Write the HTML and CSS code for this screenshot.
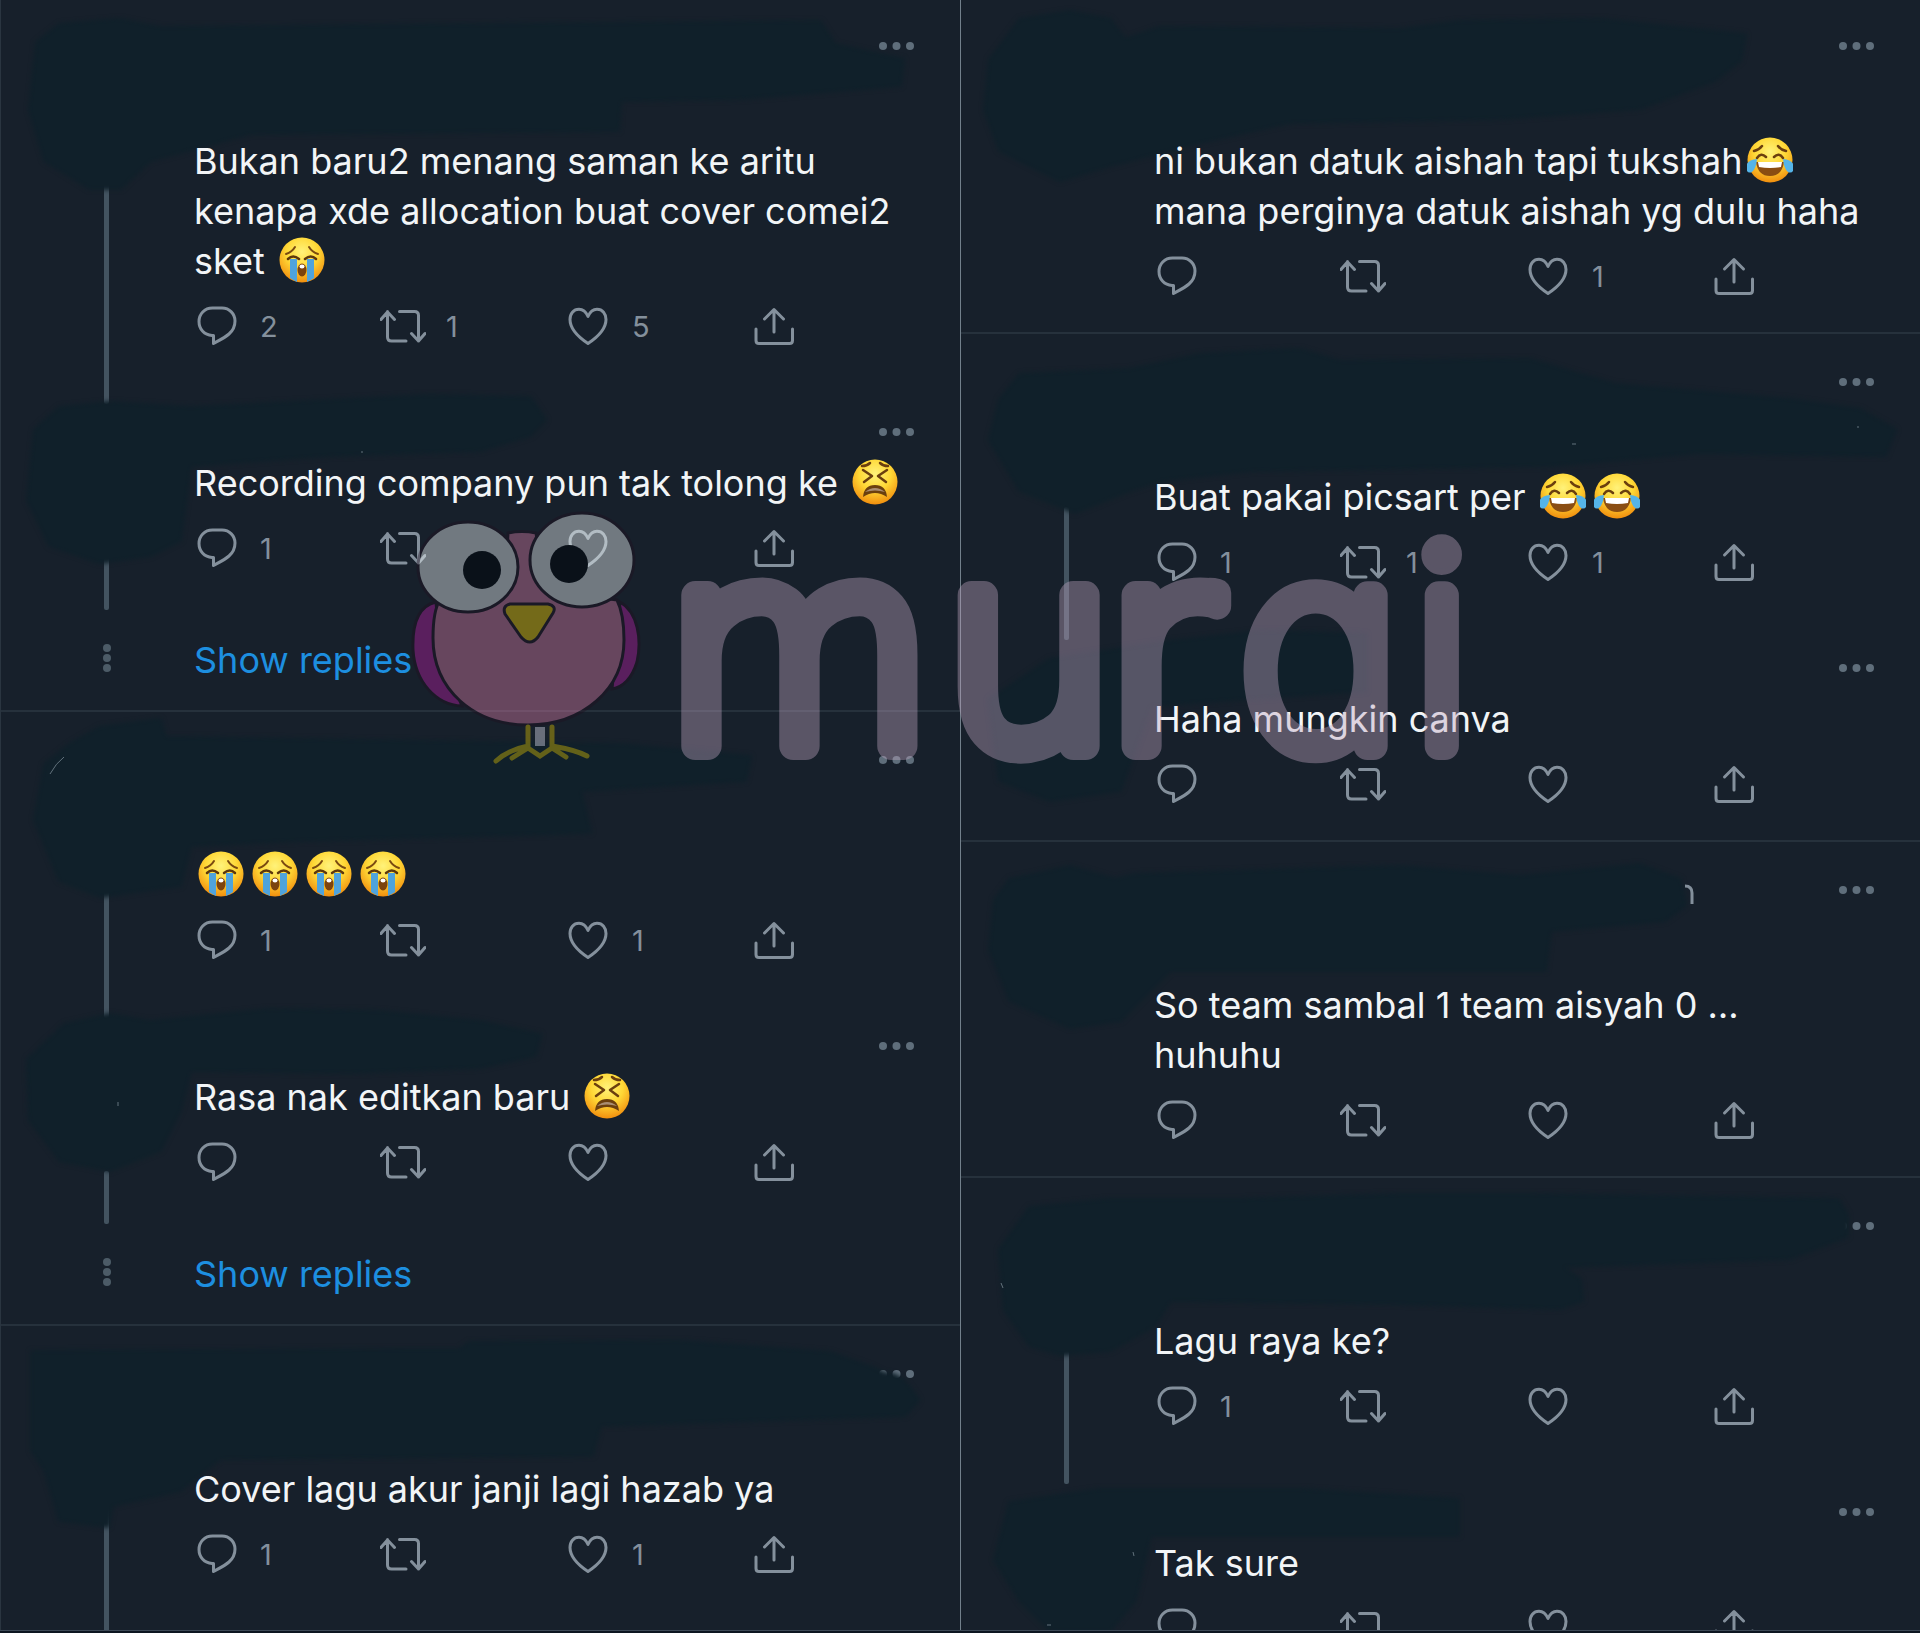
FILE: index.html
```html
<!DOCTYPE html>
<html lang="ms">
<head>
<meta charset="utf-8">
<meta name="viewport" content="width=device-width, initial-scale=1">
<title>Replies</title>
<link rel="stylesheet" href="styles.css">
</head>
<body>
<svg class="sprite" aria-hidden="true">
  <defs>
    <radialGradient id="face" cx="50%" cy="32%" r="70%">
      <stop offset="0" stop-color="#fff27a"/><stop offset=".5" stop-color="#ffd836"/><stop offset="1" stop-color="#f08a0c"/>
    </radialGradient>
    <symbol id="i-reply" viewBox="0 0 46 46"><path d="M19.500 40.500V32.500H18C10.500 32 5 26.500 5 18.500 5 11 10.500 5 18.500 5H28C35.500 5 41 11 41 18 41 23 39 27.500 35 31 31 34.500 25 37.500 19.500 40.500Z"/></symbol>
    <symbol id="i-retweet" viewBox="0 0 46 46"><path d="M7.500 8.500V34Q7.500 38 11.500 38H26M1 16.500L7.500 9L14.500 16.500M19.500 8.500H34.500Q38.500 8.500 38.500 12.500V38M31.500 30.500L38.500 38L45 30.500"/></symbol>
    <symbol id="i-heart" viewBox="0 0 46 46"><path d="M22 13.500C20 9 17 6.300 13 6.300 7.500 6.300 4 10.500 4 16.500 4 26 13 34.500 22 40.500 31 34.500 40 26 40 16.500 40 10.500 36.500 6.300 31 6.300 27 6.300 24 9 22 13.500Z"/></symbol>
    <symbol id="i-share" viewBox="0 0 46 46"><path d="M4 26V37.500Q4 40.500 7 40.500H37.500Q40.500 40.500 40.500 37.500V26M22 6.500V29M12.500 16L22 6.500L31.500 16"/></symbol>
    <symbol id="i-more" viewBox="0 0 35 16"><circle cx="4" cy="8" r="4"/><circle cx="17.500" cy="8" r="4"/><circle cx="31" cy="8" r="4"/></symbol>
    <symbol id="e-sob" viewBox="0 0 46 46">
      <circle cx="23" cy="23" r="22.500" fill="url(#face)"/>
      <path d="M7 17Q13 15 16 10M39 17Q33 15 30 10" fill="none" stroke="#7a4a10" stroke-width="2" stroke-linecap="round"/>
      <path d="M9 22Q14 17 20 22M26 22Q32 17 37 22" fill="none" stroke="#5d370c" stroke-width="2.500" stroke-linecap="round"/>
      <path d="M11 22H18V45Q14 43 11 41ZM28 22H35V41Q32 43 28 45Z" fill="#4fa3dc"/>
      <ellipse cx="23" cy="33" rx="4.500" ry="6.500" fill="#7c430e"/><ellipse cx="23" cy="29.500" rx="2.500" ry="2" fill="#fff"/>
    </symbol>
    <symbol id="e-tired" viewBox="0 0 46 46">
      <circle cx="23" cy="23" r="22.500" fill="url(#face)"/>
      <path d="M11 11L20 17L12 23M35 11L26 17L34 23M10 7Q15 7 18 4M36 7Q31 7 28 4" fill="none" stroke="#6b3f0e" stroke-width="2.500" stroke-linecap="round" stroke-linejoin="round"/>
      <path d="M11 38Q12 26 23 26Q34 26 35 38Q23 30 11 38Z" fill="#6b3f0e"/><path d="M13 33Q23 25 33 33Q23 30 13 33Z" fill="#a98d72"/>
    </symbol>
    <symbol id="e-joy" viewBox="0 0 46 46">
      <circle cx="23" cy="23" r="22.500" fill="url(#face)"/>
      <path d="M7 14Q12 13 15 9M39 14Q34 13 31 9M10 21Q14 15 19 20M27 20Q32 15 36 21" fill="none" stroke="#6b3f0e" stroke-width="2.500" stroke-linecap="round"/>
      <path d="M9 25H37Q35 39 23 39Q11 39 9 25Z" fill="#8a4d12"/><path d="M11 25H35L34 30Q23 32 12 30Z" fill="#fff"/>
      <path d="M10 22Q-1 23 -1 31Q0 37 5 35Q9 32 10 22ZM36 22Q47 23 47 31Q46 37 41 35Q37 32 36 22Z" fill="#55b4e8"/>
    </symbol>
  </defs>
</svg>

<main class="board">
  <section class="column">
    <article class="tweet tall threaded">
      <div class="rail"><span class="line"></span></div>
      <div class="body">
        <header><button class="more" aria-label="More"><svg><use href="#i-more"/></svg></button></header>
        <p>Bukan baru2 menang saman ke aritu<br>kenapa xde allocation buat cover comei2<br>sket <svg class="emoji" role="img" aria-label="loudly crying"><use href="#e-sob"/></svg></p>
        <div class="actions">
          <button aria-label="Reply"><svg><use href="#i-reply"/></svg>2</button>
          <button aria-label="Retweet"><svg><use href="#i-retweet"/></svg>1</button>
          <button aria-label="Like"><svg><use href="#i-heart"/></svg>5</button>
          <button aria-label="Share"><svg><use href="#i-share"/></svg></button>
        </div>
      </div>
    </article>
    <article class="tweet continued">
      <div class="rail"><span class="line"></span></div>
      <div class="body">
        <header><button class="more" aria-label="More"><svg><use href="#i-more"/></svg></button></header>
        <p>Recording company pun tak tolong ke <svg class="emoji" role="img" aria-label="tired face"><use href="#e-tired"/></svg></p>
        <div class="actions">
          <button aria-label="Reply"><svg><use href="#i-reply"/></svg>1</button>
          <button aria-label="Retweet"><svg><use href="#i-retweet"/></svg></button>
          <button aria-label="Like"><svg><use href="#i-heart"/></svg></button>
          <button aria-label="Share"><svg><use href="#i-share"/></svg></button>
        </div>
      </div>
    </article>
    <div class="replies"><svg class="stops" viewBox="0 0 10 30"><circle cx="5" cy="5" r="4"/><circle cx="5" cy="15" r="4"/><circle cx="5" cy="25" r="4"/></svg><a href="#">Show replies</a></div>

    <article class="tweet tall threaded">
      <div class="rail"><span class="line"></span></div>
      <div class="body">
        <header><button class="more" aria-label="More"><svg><use href="#i-more"/></svg></button></header>
        <p><svg class="emoji" role="img" aria-label="loudly crying"><use href="#e-sob"/></svg><svg class="emoji" role="img" aria-label="loudly crying"><use href="#e-sob"/></svg><svg class="emoji" role="img" aria-label="loudly crying"><use href="#e-sob"/></svg><svg class="emoji" role="img" aria-label="loudly crying"><use href="#e-sob"/></svg></p>
        <div class="actions">
          <button aria-label="Reply"><svg><use href="#i-reply"/></svg>1</button>
          <button aria-label="Retweet"><svg><use href="#i-retweet"/></svg></button>
          <button aria-label="Like"><svg><use href="#i-heart"/></svg>1</button>
          <button aria-label="Share"><svg><use href="#i-share"/></svg></button>
        </div>
      </div>
    </article>
    <article class="tweet continued">
      <div class="rail"><span class="line"></span></div>
      <div class="body">
        <header><button class="more" aria-label="More"><svg><use href="#i-more"/></svg></button></header>
        <p>Rasa nak editkan baru <svg class="emoji" role="img" aria-label="tired face"><use href="#e-tired"/></svg></p>
        <div class="actions">
          <button aria-label="Reply"><svg><use href="#i-reply"/></svg></button>
          <button aria-label="Retweet"><svg><use href="#i-retweet"/></svg></button>
          <button aria-label="Like"><svg><use href="#i-heart"/></svg></button>
          <button aria-label="Share"><svg><use href="#i-share"/></svg></button>
        </div>
      </div>
    </article>
    <div class="replies"><svg class="stops" viewBox="0 0 10 30"><circle cx="5" cy="5" r="4"/><circle cx="5" cy="15" r="4"/><circle cx="5" cy="25" r="4"/></svg><a href="#">Show replies</a></div>

    <article class="tweet tall threaded">
      <div class="rail"><span class="line"></span></div>
      <div class="body">
        <header><button class="more" aria-label="More"><svg><use href="#i-more"/></svg></button></header>
        <p>Cover lagu akur janji lagi hazab ya</p>
        <div class="actions">
          <button aria-label="Reply"><svg><use href="#i-reply"/></svg>1</button>
          <button aria-label="Retweet"><svg><use href="#i-retweet"/></svg></button>
          <button aria-label="Like"><svg><use href="#i-heart"/></svg>1</button>
          <button aria-label="Share"><svg><use href="#i-share"/></svg></button>
        </div>
      </div>
    </article>
  </section>

  <section class="column">
    <article class="tweet tall last">
      <div class="rail"></div>
      <div class="body">
        <header><button class="more" aria-label="More"><svg><use href="#i-more"/></svg></button></header>
        <p>ni bukan datuk aishah tapi tukshah<svg class="emoji" role="img" aria-label="tears of joy"><use href="#e-joy"/></svg><br>mana perginya datuk aishah yg dulu haha</p>
        <div class="actions">
          <button aria-label="Reply"><svg><use href="#i-reply"/></svg></button>
          <button aria-label="Retweet"><svg><use href="#i-retweet"/></svg></button>
          <button aria-label="Like"><svg><use href="#i-heart"/></svg>1</button>
          <button aria-label="Share"><svg><use href="#i-share"/></svg></button>
        </div>
      </div>
    </article>
    <article class="tweet tall threaded">
      <div class="rail"><span class="line"></span></div>
      <div class="body">
        <header><button class="more" aria-label="More"><svg><use href="#i-more"/></svg></button></header>
        <p>Buat pakai picsart per <svg class="emoji" role="img" aria-label="tears of joy"><use href="#e-joy"/></svg><svg class="emoji" role="img" aria-label="tears of joy"><use href="#e-joy"/></svg></p>
        <div class="actions">
          <button aria-label="Reply"><svg><use href="#i-reply"/></svg>1</button>
          <button aria-label="Retweet"><svg><use href="#i-retweet"/></svg>1</button>
          <button aria-label="Like"><svg><use href="#i-heart"/></svg>1</button>
          <button aria-label="Share"><svg><use href="#i-share"/></svg></button>
        </div>
      </div>
    </article>
    <article class="tweet last">
      <div class="rail"></div>
      <div class="body">
        <header><button class="more" aria-label="More"><svg><use href="#i-more"/></svg></button></header>
        <p>Haha mungkin canva</p>
        <div class="actions">
          <button aria-label="Reply"><svg><use href="#i-reply"/></svg></button>
          <button aria-label="Retweet"><svg><use href="#i-retweet"/></svg></button>
          <button aria-label="Like"><svg><use href="#i-heart"/></svg></button>
          <button aria-label="Share"><svg><use href="#i-share"/></svg></button>
        </div>
      </div>
    </article>
    <article class="tweet tall last">
      <div class="rail"></div>
      <div class="body">
        <header><button class="more" aria-label="More"><svg><use href="#i-more"/></svg></button></header>
        <p>So team sambal 1 team aisyah 0 …<br>huhuhu</p>
        <div class="actions">
          <button aria-label="Reply"><svg><use href="#i-reply"/></svg></button>
          <button aria-label="Retweet"><svg><use href="#i-retweet"/></svg></button>
          <button aria-label="Like"><svg><use href="#i-heart"/></svg></button>
          <button aria-label="Share"><svg><use href="#i-share"/></svg></button>
        </div>
      </div>
    </article>
    <article class="tweet tall threaded">
      <div class="rail"><span class="line"></span></div>
      <div class="body">
        <header><button class="more" aria-label="More"><svg><use href="#i-more"/></svg></button></header>
        <p>Lagu raya ke?</p>
        <div class="actions">
          <button aria-label="Reply"><svg><use href="#i-reply"/></svg>1</button>
          <button aria-label="Retweet"><svg><use href="#i-retweet"/></svg></button>
          <button aria-label="Like"><svg><use href="#i-heart"/></svg></button>
          <button aria-label="Share"><svg><use href="#i-share"/></svg></button>
        </div>
      </div>
    </article>
    <article class="tweet">
      <div class="rail"></div>
      <div class="body">
        <header><button class="more" aria-label="More"><svg><use href="#i-more"/></svg></button></header>
        <p>Tak sure</p>
        <div class="actions">
          <button aria-label="Reply"><svg><use href="#i-reply"/></svg></button>
          <button aria-label="Retweet"><svg><use href="#i-retweet"/></svg></button>
          <button aria-label="Like"><svg><use href="#i-heart"/></svg></button>
          <button aria-label="Share"><svg><use href="#i-share"/></svg></button>
        </div>
      </div>
    </article>
  </section>

  <!-- Brush strokes that hide names and avatars -->
  <svg class="redaction" viewBox="0 0 1920 1633" aria-hidden="true">
    <g>
      <path d="M37 43L60 25 120 20 160 28 820 22 835 45 903 60 900 85 740 98 620 100 618 130 250 133 150 160 120 188 90 188 45 160 30 110Z"/>
      <path d="M60 408L110 403 190 408 430 396 530 398 545 420 530 435 480 450 330 455 190 465 180 540 150 555 100 562 50 545 28 500 35 430Z"/>
      <path d="M160 720L165 738 620 745 750 757 745 780 580 790 590 832 300 840 190 845 180 885 100 896 60 880 35 820 45 765 70 745 100 728Z"/>
      <path d="M65 1025L110 1015 150 1022 270 1010 380 1012 480 1022 540 1035 535 1055 480 1067 350 1072 190 1070 180 1110 160 1150 110 1170 60 1160 30 1120 28 1060Z"/>
      <path d="M32 1352L460 1350 470 1343 680 1342 830 1353 872 1368 884 1374 893 1375 901 1379 908 1386 918 1400 905 1415 600 1425 592 1455 220 1458 180 1490 112 1505 108 1526 60 1520 45 1470 32 1450Z"/>
      <path d="M1020 20L1070 12 1110 20 1125 40 1160 28 1400 30 1460 22 1600 20 1745 35 1740 60 1715 80 1640 108 1500 118 1290 122 1200 142 1110 165 1060 180 1000 150 985 110 990 60Z"/>
      <path d="M1020 375L1130 370 1200 355 1300 350 1340 362 1530 360 1570 372 1615 385 1790 400 1860 410 1895 430 1885 455 1700 452 1550 465 1250 470 1160 480 1130 490 1075 512 1020 490 990 440 1000 400Z"/>
      <path d="M1050 660L1170 642 1260 632 1365 635 1365 690 1150 705 1120 790 1050 800 1000 780 990 700Z"/>
      <path d="M1010 880L1070 867 1115 880 1135 875 1400 867 1520 877 1640 865 1680 880 1685 905 1665 920 1550 930 1545 970 1170 970 1150 990 1120 1020 1070 1027 1010 1000 990 950 995 900Z"/>
      <path d="M1030 1208L1110 1200 1240 1200 1400 1195 1530 1195 1838 1200 1847 1215 1847 1236 1790 1258 1560 1266 1580 1280 1582 1300 1560 1308 1400 1303 1170 1300 1155 1325 1110 1350 1060 1354 1030 1345 1005 1310 1000 1250Z"/>
      <path d="M1010 1503L1100 1490 1300 1490 1458 1500 1458 1535 1150 1535 1135 1600 1110 1630 1050 1630 1020 1600 995 1560Z"/>
    </g>
    <path class="remnant" d="M1685 886Q1692 886 1692 893V904"/>
    <path class="fleck" d="M50 774Q56 763 64 757M1001 1283L1003 1288M1133 1552L1134 1556M1047 1625H1051M118 1102V1106M361 452H363M1572 444H1576M1857 427H1859"/>
  </svg>

  <!-- Murai watermark -->
  <svg class="watermark" viewBox="0 0 1920 1633" role="img" aria-label="murai">
    <g>
      <path fill="#c01eac" stroke="#201020" stroke-width="3" d="M436 602C418 606 412 625 413 650C415 682 436 705 462 706L440 650ZM620 602C638 612 642 640 637 662C632 678 624 687 612 689Z"/>
      <path fill="#df7fac" stroke="#201020" stroke-width="3" d="M508 533Q522 530 536 533L545 590L617 600C623 612 624 625 624 640C624 690 582 725 528 725C474 725 433 690 433 638C433 620 436 606 440 600L505 590Z"/>
      <ellipse cx="468" cy="567" rx="50" ry="45" fill="#f7ffff" stroke="#201020" stroke-width="3"/>
      <ellipse cx="582" cy="560" rx="52" ry="47" fill="#f7ffff" stroke="#201020" stroke-width="3"/>
      <path fill="#ffd900" stroke="#201020" stroke-width="3" stroke-linejoin="round" d="M510 604H548Q557 606 553 613L538 637Q530 647 521 637L505 614Q502 606 510 604Z"/>
      <path fill="none" stroke="#e0c200" stroke-width="5" stroke-linecap="round" d="M528 727V746Q508 750 496 761M528 748L512 758M552 727V746Q576 750 587 756M552 748L566 757M528 748L540 756L552 748"/>
      <path stroke="#e4e4f4" stroke-width="10" d="M540 727V746"/>
      <text y="746"><tspan class="wide" x="664 942 1104">mur</tspan><tspan x="1240 1412">ai</tspan></text>
      <circle class="dot" cx="1441" cy="555" r="14"/>
    </g>
    <circle cx="482" cy="570" r="19"/><circle cx="569" cy="564" r="19"/>
  </svg>
</main>
</body>
</html>
```
FILE: styles.css
```css
* { box-sizing: border-box; }

body {
  margin: 0;
  background: #0d1520;
  color: #f2f5f7;
  font-family: Inter, "Liberation Sans", sans-serif;
}

.sprite { position: absolute; width: 0; height: 0; }

.board {
  position: relative;
  display: flex;
  height: calc(100vh - 2px);
  overflow: hidden;
  background: #17202b;
  border-bottom: 1px solid #3d4956;
}

.column { flex: 1; min-width: 0; border-left: 1px solid #2a3540; }
.column + .column { border-left-color: #72808b; }

.tweet { display: flex; }
.tweet.last { border-bottom: 2px solid #26313c; }

.rail {
  flex: none;
  display: flex;
  width: 193px;
  padding: 173px 0 0 103px;
}
.line { width: 5px; background: #435360; border-radius: 2px; }
.threaded .line { margin-bottom: -20px; }
.continued .line { margin-bottom: -4px; }

.body { flex: 1; min-width: 0; padding-bottom: 35px; }
.last .body { padding-bottom: 33px; }

header {
  display: flex;
  justify-content: flex-end;
  align-items: flex-start;
  height: 74px;
  padding: 40px 46px 0 0;
}
.tall header { height: 138px; }
.tweet:first-child header { height: 136px; padding-top: 38px; }

button {
  display: flex;
  align-items: center;
  padding: 0;
  border: 0;
  background: none;
  color: #84909c;
  font: inherit;
  cursor: pointer;
}
.more svg { display: block; width: 35px; height: 16px; fill: #5f6e7b; }

p {
  position: relative;
  z-index: 2;
  margin: 0;
  font-size: 36px;
  line-height: 50px;
  white-space: nowrap;
}

.emoji {
  width: 46px;
  height: 46px;
  margin: -4px 4px;
  vertical-align: -5px;
  overflow: visible;
}

.actions {
  position: relative;
  z-index: 2;
  display: grid;
  grid-template-columns: repeat(4, 186px);
  height: 46px;
  margin-top: 17px;
}
.actions button { gap: 20px; font-size: 29px; }
.actions svg {
  width: 46px;
  height: 46px;
  fill: none;
  stroke: #84909c;
  stroke-width: 3;
  stroke-linecap: round;
  stroke-linejoin: round;
}

.replies {
  display: flex;
  height: 106px;
  padding-top: 30px;
  border-bottom: 2px solid #26313c;
  font-size: 36px;
  line-height: 49px;
}
.replies a { color: #1d8fe0; text-decoration: none; }
.stops { width: 10px; height: 30px; margin: 7px 82px 0 101px; fill: #4c5b67; }

.redaction,
.watermark {
  position: absolute;
  top: 0;
  left: 0;
  width: 100%;
  pointer-events: none;
}
.redaction { z-index: 1; }
.redaction g {
  fill: #10202a;
  stroke: #10202a;
  stroke-width: 4;
  stroke-linejoin: round;
  filter: blur(2px);
}
.remnant { fill: none; stroke: #84909c; stroke-width: 3; }
.fleck { fill: none; stroke: #62727c; stroke-width: 1; }

.watermark { z-index: 3; }
.watermark g { opacity: .4; }
.watermark text {
  font-family: Inter, sans-serif;
  font-size: 276px;
  font-weight: 100;
  font-feature-settings: "cv11";
  fill: #bea5c0;
  stroke: #bea5c0;
  stroke-width: 28px;
  stroke-linecap: round;
  stroke-linejoin: round;
}
.watermark .wide {
  font-family: "DejaVu Sans", Inter, sans-serif;
  font-weight: 200;
}
.watermark circle { fill: #0a1119; }
.watermark .dot { fill: #bea5c0; }
```
